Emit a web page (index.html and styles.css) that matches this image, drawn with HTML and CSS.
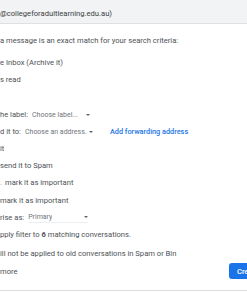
FILE: index.html
```html
<!DOCTYPE html>
<html lang="en">
<head>
    <meta charset="UTF-8">
    <meta name="viewport" content="width=device-width, initial-scale=1.0">
    <title>Create filter</title>
    <link rel="stylesheet" href="styles.css">
</head>
<body>

    <div class="dialog">
        <div class="query">@collegeforadultlearning.edu.au)</div>

        <p class="intro">a message is an exact match for your search criteria:</p>

        <ul class="actions">
            <li>e Inbox (Archive it)</li>
            <li>s read</li>
            <li></li>
            <li>he label:<span class="select label-select"><span class="value">Choose label...</span><span class="caret"></span></span></li>
            <li>d it to:<span class="select address-select"><span class="value">Choose an address.</span><span class="caret"></span></span><a class="link" href="#">Add forwarding address</a></li>
            <li>it</li>
            <li>send it to Spam</li>
            <li><span class="cut">.</span>mark it as important</li>
            <li>mark it as important</li>
            <li>rise as:<span class="select category-select"><span class="value">Primary</span><span class="caret"></span></span></li>
            <li>pply filter to <b>6</b> matching conversations.</li>
        </ul>

        <p class="note">ill not be applied to old conversations in Spam or Bin</p>

        <div class="footer">
            <a class="more" href="#">more</a>
            <button type="button">Create filter</button>
        </div>
    </div>

</body>
</html>
```

FILE: styles.css
```css
/* filter dialog */
body {
    margin: 0;
    font-family: Roboto, Arial, sans-serif;
    font-size: 7.6px;
    color: #4d5156;
    background-color: #fff;
    overflow: hidden;
}

.dialog {
    width: 320px;
    height: 290px;
    border-bottom: 1px solid #dadce0;
    display: flex;
    flex-direction: column;
}

.query {
    height: 24px;
    line-height: 28px;
    background-color: #f1f3f4;
    border-bottom: 1px solid #e0e0e0;
    color: #3c4043;
    box-sizing: border-box;
}

.intro {
    margin: 8px 0 5px;
    line-height: 17px;
}

.actions {
    list-style: none;
    margin: 0;
    padding: 0;
}

.actions li {
    height: 17.2px;
    line-height: 17.2px;
    white-space: nowrap;
}

.cut {
    margin-right: 3px;
    color: #9aa0a6;
}

.select {
    display: inline-flex;
    align-items: center;
    justify-content: space-between;
    height: 10px;
    margin-left: 4px;
    vertical-align: middle;
    color: #70757a;
    font-size: 7px;
    line-height: 10px;
}

.value {
    overflow: hidden;
}

.label-select {
    width: 58px;
}

.address-select {
    width: 68px;
}

.category-select {
    width: 60px;
    border-bottom: 1px solid #eceff1;
}

.caret {
    flex-shrink: 0;
    width: 0;
    height: 0;
    border-left: 2px solid transparent;
    border-right: 2px solid transparent;
    border-top: 2px solid #5f6368;
}

.link {
    margin-left: 17px;
    color: #1a73e8;
    font-size: 7.3px;
    font-weight: 500;
    text-decoration: none;
}

.note {
    margin: 2px 0 0;
    line-height: 17px;
}

.footer {
    display: grid;
    grid-template-columns: 229px auto;
    align-items: center;
    margin-top: 1px;
}

.more {
    color: #4d5156;
    text-decoration: none;
}

button {
    height: 16px;
    padding: 0 8px;
    font-family: inherit;
    font-size: 7.6px;
    font-weight: 500;
    color: #fff;
    background-color: #1a73e8;
    border: none;
    border-radius: 3px;
    text-align: left;
}
```
